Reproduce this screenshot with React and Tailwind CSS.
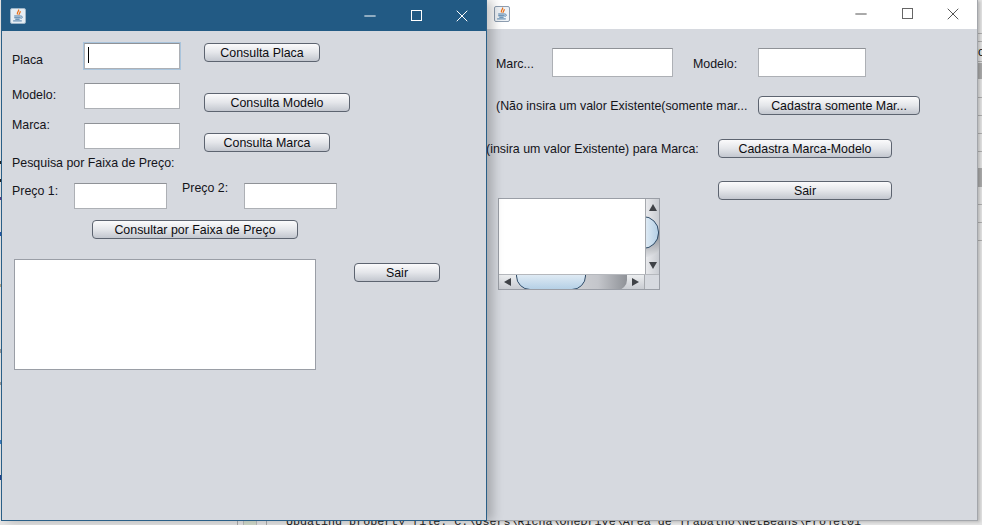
import { Minus, X } from "lucide-react";

function JavaIcon({ dark }) {
    return (
        <div className={`w-[16px] h-[16px] rounded-[2px] border flex items-center justify-center ${dark ? "bg-[#e6edf3] border-[#9db4c6]" : "bg-[#eef2f6] border-[#8d9db0]"}`}>
            <svg width="12" height="13" viewBox="0 0 11 12">
                <path d="M6 0.5C7 2 4 3 5 5M7.5 2C8 3.5 6 4 6.5 5.5" stroke="#e8701a" strokeWidth="1.1" fill="none" />
                <path d="M2 6.5h6M2 8h6M3 9.5h4" stroke="#4a7ca8" strokeWidth="1" fill="none" />
                <path d="M8 6.5c2 0 2 2 0 2.2M1 11h8" stroke="#4a7ca8" strokeWidth="0.9" fill="none" />
            </svg>
        </div>
    );
}

function Btn({ children, className = "" }) {
    return (
        <button className={`h-[19px] shrink-0 pt-[2px] rounded-[4px] border border-[#5d6470] bg-gradient-to-b from-[#fbfbfc] via-[#e4e6ea] to-[#c3c7cf] text-[12.4px] leading-[15px] text-[#0c0c10] text-center whitespace-nowrap ${className}`}>
            {children}
        </button>
    );
}

function Field({ className = "", children }) {
    return (
        <div className={`shrink-0 bg-white border border-[#adb0b5] border-t-[#8f9297] ${className}`}>
            {children}
        </div>
    );
}

function Label({ children, className = "" }) {
    return <span className={`block text-[12.4px] leading-[14px] text-[#14141a] whitespace-nowrap ${className}`}>{children}</span>;
}

function Arrow({ dir }) {
    const cls = {
        up: "border-x-[4px] border-x-transparent border-b-[7px] border-b-[#3f4247]",
        down: "border-x-[4px] border-x-transparent border-t-[7px] border-t-[#3f4247]",
        left: "border-y-[4px] border-y-transparent border-r-[7px] border-r-[#3f4247]",
        right: "border-y-[4px] border-y-transparent border-l-[7px] border-l-[#3f4247]",
    }[dir];
    return <div className={`w-0 h-0 ${cls}`} />;
}

function ScrollBox() {
    return (
        <div className="w-[162px] h-[92px] border border-[#9a9ea6] flex flex-col">
            <div className="flex h-[75px]">
                <div className="w-[146px] bg-white" />
                <div className="relative w-[14px] overflow-hidden border-l border-[#a6a9ae] bg-gradient-to-r from-[#e8e9ec] to-[#c9ccd2] flex flex-col items-center justify-between py-[5px]">
                    <Arrow dir="up" />
                    <Arrow dir="down" />
                    <div className="absolute left-0 top-[33px] w-[14px] h-[25px] rounded-br-[12px] bg-gradient-to-b from-[#85888e] to-[#dfe1e5]" />
                    <div className="absolute left-[-6px] top-[17px] w-[19px] h-[33px] rounded-r-[16px] border border-[#2e4a66] bg-gradient-to-r from-[#eef4f9] to-[#b5d0e6]" />
                </div>
            </div>
            <div className="flex h-[15px] border-t border-[#b5b8bd]">
                <div className="relative w-[145px] overflow-hidden bg-gradient-to-b from-[#eceef0] to-[#c9ccd2] flex items-center justify-between px-[5px]">
                    <Arrow dir="left" />
                    <Arrow dir="right" />
                    <div className="absolute left-[70px] top-0 w-[58px] h-[15px] rounded-br-[10px] bg-gradient-to-r from-[#d0d2d6] via-[#c4c6cb] to-[#8f9298]" />
                    <div className="absolute left-[17px] top-[-6px] w-[70px] h-[21px] rounded-b-[14px] border border-[#2e4a66] bg-gradient-to-b from-[#eef4f9] to-[#b5d0e6]" />
                </div>
                <div className="flex-1 border-l border-[#a6a9ae] bg-[#d6d9df]" />
            </div>
        </div>
    );
}

function ConsultaWindow() {
    return (
        <div className="absolute left-[1px] top-0 w-[486px] h-[521px] flex flex-col border border-[#2a5f87] border-t-0 bg-[#d6d9df] shadow-[6px_0_10px_rgba(0,0,0,0.22)]">
            <div className="h-[31px] shrink-0 flex items-center bg-[#225a84] pl-[8px] pr-[1px] text-white">
                <JavaIcon dark />
                <div className="ml-auto flex items-center">
                    <div className="w-[46px] flex justify-center"><Minus size={18} strokeWidth={1} absoluteStrokeWidth /></div>
                    <div className="w-[46px] flex justify-center"><div className="w-[11px] h-[11px] border border-white" /></div>
                    <div className="w-[46px] flex justify-center"><X size={20} strokeWidth={1} absoluteStrokeWidth /></div>
                </div>
            </div>

            <div className="flex pl-[10px] pt-[12px]">
                <div className="w-[72px] flex flex-col">
                    <Label className="mt-[10px]">Placa</Label>
                    <Label className="mt-[21px]">Modelo:</Label>
                    <Label className="mt-[16px]">Marca:</Label>
                </div>
                <div className="w-[96px] flex flex-col gap-[14px]">
                    <Field className="h-[26px] border-[#6f9cc6] border-t-[#6f9cc6] shadow-[0_0_0_1px_#a9c4dc] pl-[3px] pt-[3px]">
                        <div className="w-px h-[16px] bg-black" />
                    </Field>
                    <Field className="h-[26px]" />
                    <Field className="h-[26px]" />
                </div>
                <div className="ml-[24px] flex flex-col items-start">
                    <Btn className="w-[116px]">Consulta Placa</Btn>
                    <Btn className="w-[146px] mt-[31px]">Consulta Modelo</Btn>
                    <Btn className="w-[126px] mt-[21px]">Consulta Marca</Btn>
                </div>
            </div>

            <div className="flex pl-[10px] mt-[4px]"><Label>Pesquisa por Faixa de Preço:</Label></div>

            <div className="flex pl-[10px] mt-[13px]">
                <Label className="w-[62px] mt-[1px]">Preço 1:</Label>
                <Field className="w-[93px] h-[26px]" />
                <Label className="w-[62px] ml-[15px] mt-[-2px]">Preço 2:</Label>
                <Field className="w-[93px] h-[26px]" />
            </div>

            <div className="flex pl-[90px] mt-[11px]"><Btn className="w-[206px]">Consultar por Faixa de Preço</Btn></div>

            <div className="flex items-start pl-[12px] mt-[20px]">
                <div className="w-[302px] h-[111px] bg-white border border-[#9a9ea6]" />
                <Btn className="w-[86px] ml-[38px] mt-[4px]">Sair</Btn>
            </div>
        </div>
    );
}

function CadastroWindow() {
    return (
        <div className="absolute left-[487px] top-0 w-[491px] h-[521px] flex flex-col border-r border-b border-[#a3a6ab] bg-[#d6d9df] shadow-[2px_1px_3px_rgba(0,0,0,0.2)]">
            <div className="h-[29px] shrink-0 flex items-center bg-white pl-[7px] pr-[1px] pb-[2px] text-[#555]">
                <JavaIcon />
                <div className="ml-auto flex items-center">
                    <div className="w-[46px] flex justify-center"><Minus size={18} strokeWidth={1} absoluteStrokeWidth /></div>
                    <div className="w-[46px] flex justify-center"><div className="w-[11px] h-[11px] border border-[#666]" /></div>
                    <div className="w-[46px] flex justify-center"><X size={20} strokeWidth={1} absoluteStrokeWidth /></div>
                </div>
            </div>

            <div className="flex items-start pl-[9px] mt-[19px]">
                <Label className="w-[56px] mt-[9px]">Marc...</Label>
                <Field className="w-[121px] h-[29px]" />
                <Label className="w-[65px] ml-[20px] mt-[9px]">Modelo:</Label>
                <Field className="w-[108px] h-[29px]" />
            </div>

            <div className="flex items-center pl-[9px] mt-[19px]">
                <Label className="w-[262px]">(Não insira um valor Existente(somente mar...</Label>
                <Btn className="w-[162px]">Cadastra somente Mar...</Btn>
            </div>

            <div className="flex items-center mt-[24px]">
                <Label className="w-[232px] ml-[-1px]">(insira um valor Existente) para Marca:</Label>
                <Btn className="w-[174px]">Cadastra Marca-Modelo</Btn>
            </div>

            <div className="flex pl-[231px] mt-[23px]"><Btn className="w-[174px]">Sair</Btn></div>

            <div className="flex pl-[11px] mt-[-2px]"><ScrollBox /></div>
        </div>
    );
}

export default function App() {
    const rowLines = [33, 41, 61, 97, 115, 133, 151, 204, 222, 240];
    const edgeMarks = [
        { y: 161, h: 3, c: "#222" },
        { y: 179, h: 3, c: "#222" },
        { y: 197, h: 3, c: "#5b3a8a" },
        { y: 232, h: 4, c: "#2456a8" },
        { y: 284, h: 3, c: "#b9a88a" },
        { y: 349, h: 4, c: "#999" },
        { y: 382, h: 3, c: "#999" },
        { y: 440, h: 4, c: "#3d7fc4" },
        { y: 475, h: 5, c: "#1f3f8f" },
    ];
    return (
        <div className="relative w-[982px] h-[525px] overflow-hidden bg-[#e4e4e4] font-['Liberation_Sans',Arial,sans-serif]">
            {/* netbeans behind the windows */}
            {rowLines.map((y) => (
                <div key={y} className="absolute left-[978px] w-[4px] h-px bg-[#b0b0b0]" style={{ top: y }} />
            ))}
            <div className="absolute left-[978px] top-[63px] w-[4px] h-[16px] bg-[#ababab]" />
            <div className="absolute left-[978px] top-[168px] w-[4px] h-[19px] bg-[#ababab]" />
            <div className="absolute left-[974px] top-[45px] text-[12px] leading-[14px] text-[#111]">ro</div>
            {edgeMarks.map((m) => (
                <div key={m.y} className="absolute left-0 w-px" style={{ top: m.y, height: m.h, background: m.c }} />
            ))}
            <div className="absolute left-[237px] top-[520px] w-[30px] h-[5px] flex border-x border-[#aaa]">
                <div className="ml-[5px] w-[14px] h-[5px] border-x border-[#bbb] bg-[#d3dccd]" />
            </div>
            <div className="absolute left-[286px] top-[515px] text-[11.7px] leading-[15px] text-[#222] whitespace-nowrap font-['Liberation_Mono',monospace]">
                Updating property file: C:\Users\Richa\OneDrive\Área de Trabalho\NetBeans\Projet01
            </div>

            <CadastroWindow />
            <ConsultaWindow />
        </div>
    );
}
